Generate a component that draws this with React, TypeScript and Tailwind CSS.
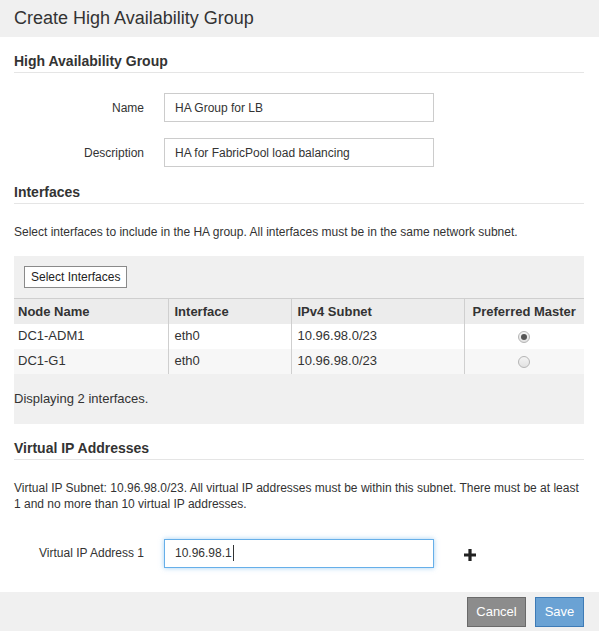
import React from 'react'

interface Iface {
  node: string
  iface: string
  subnet: string
  preferred: boolean
}

const rows: Iface[] = [
  { node: 'DC1-ADM1', iface: 'eth0', subnet: '10.96.98.0/23', preferred: true },
  { node: 'DC1-G1', iface: 'eth0', subnet: '10.96.98.0/23', preferred: false },
]

function SectionTitle({ children }: { children: React.ReactNode }) {
  return (
    <h2 className="text-[14px] font-bold leading-[16px] pb-[3px] border-b border-[#e5e5e5] text-[#333]">
      {children}
    </h2>
  )
}

function Radio({ checked }: { checked: boolean }) {
  return (
    <span className="inline-flex w-[12px] h-[12px] rounded-full border border-[#b5b5b5] bg-gradient-to-b from-[#f4f4f4] to-[#e2e2e2] items-center justify-center align-middle">
      {checked && <span className="w-[6px] h-[6px] rounded-full bg-[#555]" />}
    </span>
  )
}

function FieldRow({ label, value, focused }: { label: string; value: string; focused?: boolean }) {
  return (
    <div className="flex items-center">
      <label className="w-[130px] text-right text-[12px] text-[#333] shrink-0">{label}</label>
      <div
        className={`ml-[20px] w-[270px] h-[29px] flex items-center px-[10px] text-[12px] text-[#333] bg-white border ${
          focused ? 'border-[#66afe9] shadow-[0_0_5px_rgba(102,175,233,0.6)]' : 'border-[#ccc]'
        }`}
      >
        {value}
        {focused && <span className="inline-block w-px h-[16px] bg-[#333] ml-px" />}
      </div>
    </div>
  )
}

export default function App() {
  return (
    <div
      className="w-[599px] h-[631px] bg-white text-[#333] flex flex-col overflow-hidden"
      style={{ fontFamily: '"Liberation Sans", Arial, sans-serif' }}
    >
      <div className="h-[37px] shrink-0 bg-[#f0f0f0] px-[14px] flex items-center text-[18px] text-[#333]">
        Create High Availability Group
      </div>

      <div className="pl-[14px] pr-[15px] flex-1">
        <div className="mt-[16px]">
          <SectionTitle>High Availability Group</SectionTitle>
        </div>

        <div className="mt-[20px] flex flex-col gap-[16px]">
          <FieldRow label="Name" value="HA Group for LB" />
          <FieldRow label="Description" value="HA for FabricPool load balancing" />
        </div>

        <div className="mt-[17px]">
          <SectionTitle>Interfaces</SectionTitle>
        </div>
        <p className="mt-[20px] text-[12px] leading-[16px]">
          Select interfaces to include in the HA group. All interfaces must be in the same network subnet.
        </p>

        <div className="mt-[16px] bg-[#f0f0f0] pt-[10px] pb-[17px]">
          <button className="block ml-[10px] h-[22px] px-[6px] bg-white border border-[#8a8a8a] text-[12px] text-[#222] leading-none">
            Select Interfaces
          </button>
          <table className="mt-[10px] w-full table-fixed border-collapse text-[13px]">
            <colgroup>
              <col className="w-[154px]" />
              <col className="w-[123px]" />
              <col className="w-[173px]" />
              <col className="w-[120px]" />
            </colgroup>
            <thead>
              <tr className="h-[25px] bg-[#ececec] border-t border-[#cfcfcf]">
                <th className="text-left font-bold px-[4px] border-r border-[#cfcfcf]">Node Name</th>
                <th className="text-left font-bold px-[6px] border-r border-[#cfcfcf]">Interface</th>
                <th className="text-left font-bold px-[6px] border-r border-[#cfcfcf]">IPv4 Subnet</th>
                <th className="text-center font-bold px-[4px]">Preferred Master</th>
              </tr>
            </thead>
            <tbody>
              {rows.map((r, i) => (
                <tr key={r.node} className={`h-[25px] ${i % 2 === 0 ? 'bg-white' : 'bg-[#f7f7f7]'}`}>
                  <td className="px-[4px] border-r border-[#cfcfcf]">{r.node}</td>
                  <td className="px-[6px] border-r border-[#cfcfcf]">{r.iface}</td>
                  <td className="px-[6px] border-r border-[#cfcfcf]">{r.subnet}</td>
                  <td className="text-center">
                    <Radio checked={r.preferred} />
                  </td>
                </tr>
              ))}
            </tbody>
          </table>
          <p className="mt-[17px] text-[13px] leading-[16px]">Displaying 2 interfaces.</p>
        </div>

        <div className="mt-[16px]">
          <SectionTitle>Virtual IP Addresses</SectionTitle>
        </div>
        <p className="mt-[20px] text-[12px] leading-[16px]">
          Virtual IP Subnet: 10.96.98.0/23. All virtual IP addresses must be within this subnet. There must be at least
          1 and no more than 10 virtual IP addresses.
        </p>

        <div className="mt-[27px] flex items-center">
          <FieldRow label="Virtual IP Address 1" value="10.96.98.1" focused />
          <svg className="ml-[29px] mt-[4px]" width="14" height="14" viewBox="0 0 14 14">
            <path d="M7 1v12M1 7h12" stroke="#222" strokeWidth="3.2" />
          </svg>
        </div>
      </div>

      <div className="h-[39px] shrink-0 bg-[#f0f0f0] flex items-center justify-end gap-[9px] pr-[15px]">
        <button className="h-[30px] w-[59px] bg-[#8c8c8c] border border-[#6a6a6a] text-white text-[13px]">
          Cancel
        </button>
        <button className="h-[30px] w-[49px] bg-[#6aa2d4] border border-[#3e7bb6] text-white text-[13px]">
          Save
        </button>
      </div>
    </div>
  )
}
